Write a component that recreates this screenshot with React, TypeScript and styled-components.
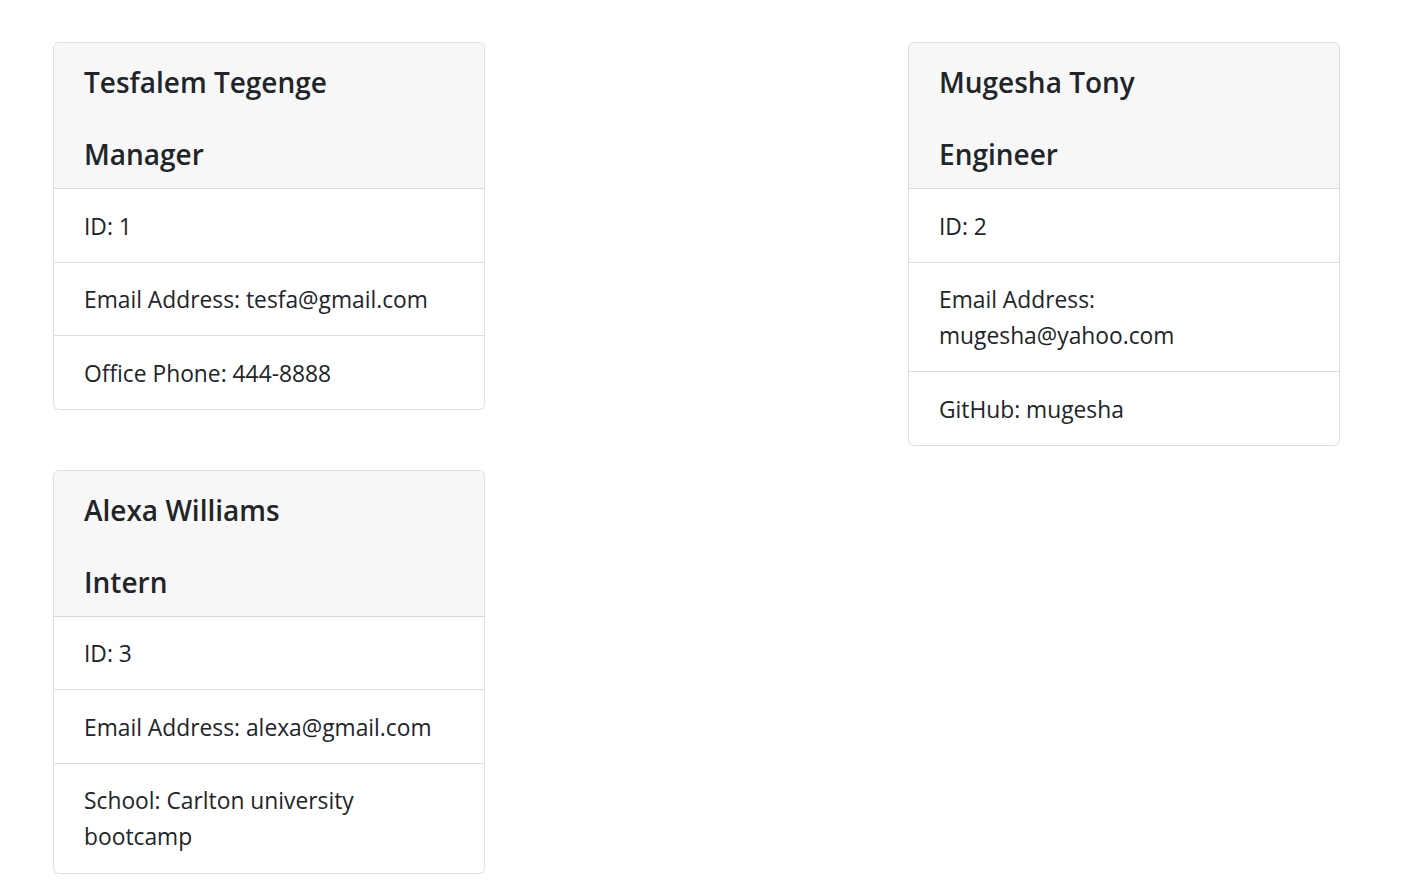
import React from "react";
import styled, { createGlobalStyle } from "styled-components";

const GlobalStyle = createGlobalStyle`
  html, body { margin: 0; padding: 0; background: #ffffff; }
  body {
    font-family: "Open Sans", "Noto Sans", sans-serif;
    color: #212529;
  }
  * { box-sizing: border-box; }
`;

const Page = styled.main`
  display: grid;
  grid-template-columns: 432px 432px;
  column-gap: 423px;
  row-gap: 24px;
  align-items: start;
  padding: 42px 0 0 53px;
`;

const Card = styled.section`
  display: flex;
  flex-direction: column;
  border: 1px solid rgba(0, 0, 0, 0.125);
  border-radius: 6px;
  overflow: hidden;
  background: #fff;
`;

const Header = styled.header`
  background: #f7f7f7;
  padding: 20px 30px 15px;
  border-bottom: 1px solid rgba(0, 0, 0, 0.125);
  display: flex;
  flex-direction: column;
  gap: 34px;
`;

const Title = styled.h3`
  margin: 0;
  font-size: 28px;
  line-height: 38px;
  font-weight: 600;
  color: #212529;
`;

const List = styled.ul`
  list-style: none;
  margin: 0;
  padding: 0;
`;

const Item = styled.li`
  padding: 19.5px 30px 17.1px;
  font-size: 22.8px;
  line-height: 36px;
  border-top: 1px solid rgba(0, 0, 0, 0.125);
  &:first-child { border-top: none; }
`;

type Employee = {
  name: string;
  role: string;
  id: number;
  email: string;
  extra: string;
};

const employees: Employee[] = [
  { name: "Tesfalem Tegenge", role: "Manager", id: 1, email: "tesfa@gmail.com", extra: "Office Phone: 444-8888" },
  { name: "Mugesha Tony", role: "Engineer", id: 2, email: "mugesha@yahoo.com", extra: "GitHub: mugesha" },
  { name: "Alexa Williams", role: "Intern", id: 3, email: "alexa@gmail.com", extra: "School: Carlton university bootcamp" },
];

export default function App() {
  return (
    <>
      <GlobalStyle />
      <Page>
        {employees.map((e) => (
          <Card key={e.id}>
            <Header>
              <Title>{e.name}</Title>
              <Title>{e.role}</Title>
            </Header>
            <List>
              <Item>ID: {e.id}</Item>
              <Item>Email Address: {e.email}</Item>
              <Item>{e.extra}</Item>
            </List>
          </Card>
        ))}
      </Page>
    </>
  );
}
